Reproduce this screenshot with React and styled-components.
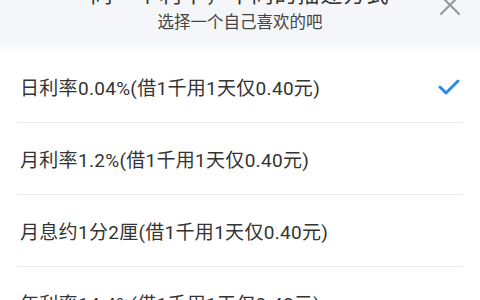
import React from 'react';
import styled, { createGlobalStyle } from 'styled-components';

const GlobalStyle = createGlobalStyle`
  html, body {
    margin: 0;
    padding: 0;
    background: #ffffff;
    overflow: hidden;
  }
  body {
    font-family: Roboto, "Noto Sans CJK SC", sans-serif;
  }
`;

const options = [
  { label: '日利率0.04%(借1千用1天仅0.40元)', checked: true },
  { label: '月利率1.2%(借1千用1天仅0.40元)' },
  { label: '月息约1分2厘(借1千用1天仅0.40元)' },
  { label: '年利率14.4%(借1千用1天仅0.40元)' },
];

function App() {
  return (
    <>
      <GlobalStyle />
      <Sheet>
        <Header>
          <Title>同一个利率，不同的描述方式</Title>
          <Subtitle>选择一个自己喜欢的吧</Subtitle>
          <Close aria-label="关闭">
            <svg width="22" height="22" viewBox="0 0 22 22">
              <path d="M2 2 L20 20 M20 2 L2 20" stroke="#9a9a9a" strokeWidth="2.2" strokeLinecap="round" fill="none" />
            </svg>
          </Close>
        </Header>
        <List>
          {options.map((o, i) => (
            <Row key={i} last={i === options.length - 1}>
              <Label>{o.label}</Label>
              {o.checked && (
                <svg width="22" height="16" viewBox="0 0 22 16">
                  <path d="M2 8 L8 14 L20 2" stroke="#2a8ce0" strokeWidth="3" strokeLinecap="round" strokeLinejoin="round" fill="none" />
                </svg>
              )}
            </Row>
          ))}
        </List>
      </Sheet>
    </>
  );
}

export default App;

const Sheet = styled.div`
  width: 480px;
  height: 300px;
  overflow: hidden;
  display: flex;
  flex-direction: column;
`;

const Header = styled.div`
  position: relative;
  margin-top: -18px;
  padding-bottom: 18px;
  display: flex;
  flex-direction: column;
  align-items: center;
  gap: 5px;
  background: linear-gradient(to bottom, #f5f6f9 0%, #f5f6f9 80%, #fcfcfd 100%);
`;

const Title = styled.div`
  font-size: 22px;
  line-height: 26px;
  color: #333;
  letter-spacing: 1px;
`;

const Subtitle = styled.div`
  font-size: 16.5px;
  line-height: 20px;
  color: #444;
`;

const Close = styled.div`
  position: absolute;
  right: 19px;
  top: 12px;
  width: 22px;
  height: 22px;
`;

const List = styled.div`
  display: flex;
  flex-direction: column;
  margin: 0 18px;
`;

const Row = styled.div`
  height: 71px;
  display: flex;
  align-items: center;
  justify-content: space-between;
  padding: 0 2px;
  border-bottom: 1px solid ${props => (props.last ? 'transparent' : '#e9e9e9')};
  flex-shrink: 0;
`;

const Label = styled.div`
  font-size: 19px;
  letter-spacing: 0.3px;
  color: #333;
`;
